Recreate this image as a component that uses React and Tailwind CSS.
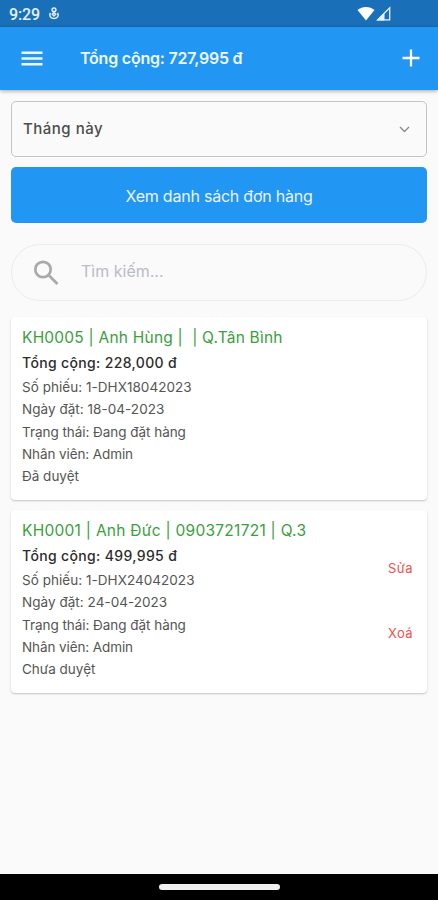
const orders = [
  {
    title: "KH0005 | Anh Hùng |  | Q.Tân Bình",
    titleStyle: "tracking-[0.22px]",
    total: "228,000 đ",
    code: "1-DHX18042023",
    date: "18-04-2023",
    status: "Đã duyệt",
    actions: false,
  },
  {
    title: "KH0001 | Anh Đức | 0903721721 | Q.3",
    titleStyle: "tracking-[0.27px]",
    total: "499,995 đ",
    code: "1-DHX24042023",
    date: "24-04-2023",
    status: "Chưa duyệt",
    actions: true,
  },
];

function StatusBar() {
  return (
    <div className="flex h-[27px] items-center bg-[#1a70b8] pl-[9px] pr-[47px] text-white">
      <span className="pt-[1px] font-[Roboto,sans-serif] text-[16px] leading-[27px] font-medium tracking-[-0.1px] text-[#e6f1fa]">9:29</span>
      <svg className="ml-[9px] h-[13px] w-[10px]" viewBox="0 0 10 13" fill="none" stroke="#e3eef8" strokeWidth="1.5">
        <circle cx="5" cy="2.800" r="1.900" />
        <path d="M3.800 4.300L6.700 7.300L5 9L3.300 7.300L5.500 5.100M1.500 6C-0.300 9 2 11.600 5 11.600S10.300 9 8.500 6" />
      </svg>
      <div className="ml-auto flex items-center gap-[1px]">
        <svg className="h-[15px] w-[18px]" viewBox="0 0 18 15" fill="white">
          <path d="M0.500 3.900C5.300 -0.100 12.700 -0.100 17.500 3.900L9 14.500Z" />
        </svg>
        <svg className="h-[15px] w-[15px]" viewBox="0 0 15 15">
          <path d="M13.700 1.800V13.800H1.700Z" fill="none" stroke="#e6f1fa" strokeWidth="1.300" />
          <path d="M0.500 14.500L8.500 6.500V14.500Z" fill="#e6f1fa" />
        </svg>
      </div>
    </div>
  );
}

function OrderCard({ order }) {
  return (
    <article className="flex h-[183px] justify-between rounded-[4px] bg-white pl-[11px] pr-[14px] pt-[8px] shadow-[0_1px_2px_rgba(0,0,0,0.22)]">
      <div className="whitespace-pre">
        <h2 className={`text-[15.5px] leading-[25px] text-[#38a03c] ${order.titleStyle}`}>{order.title}</h2>
        <p className="text-[14px] leading-[25px] font-medium tracking-[0.35px] text-[#2c2c2c]">Tổng cộng: {order.total}</p>
        <div className="pt-[1px] text-[13.5px] leading-[22.3px] text-[#555]">
          <p className="tracking-[0.04px]">Số phiếu: {order.code}</p>
          <p className="tracking-[0.04px]">Ngày đặt: {order.date}</p>
          <p className="tracking-[-0.04px]">Trạng thái: Đang đặt hàng</p>
          <p className="tracking-[-0.1px]">Nhân viên: Admin</p>
          <p>{order.status}</p>
        </div>
      </div>
      {order.actions && (
        <div className="flex flex-col items-end gap-[45px] pt-[40px] text-[13px] leading-[20px] tracking-[0.4px] text-[#f2504b]">
          <button>Sửa</button>
          <button>Xoá</button>
        </div>
      )}
    </article>
  );
}

export default function App() {
  return (
    <div className="flex h-[900px] w-[438px] flex-col overflow-hidden bg-[#fafafa] font-[Inter,sans-serif]">
      <StatusBar />
      <header className="flex h-[63px] shrink-0 items-center bg-[#2196f3] pl-[21px] pr-[18px] shadow-[0_1px_4px_rgba(0,0,0,0.35)]">
        <svg className="h-[16px] w-[22px]" viewBox="0 0 22 16" fill="#eef7fe">
          <path d="M0.500 0.500H21.500V3H0.500ZM0.500 6.300H21.500V8.800H0.500ZM0.500 12.100H21.500V14.600H0.500Z" />
        </svg>
        <h1 className="ml-[37px] pb-[1px] text-[16px] leading-[24px] font-semibold tracking-[-0.22px] text-[#eef7fe]">Tổng cộng: 727,995 đ</h1>
        <svg className="ml-auto mb-[1px] h-[18px] w-[18px]" viewBox="0 0 18 18" fill="none" stroke="white" strokeWidth="2.300">
          <path d="M9 0.500V17.500M0.500 9H17.500" />
        </svg>
      </header>
      <main className="flex min-h-0 flex-1 flex-col px-[11px] pt-[11px]">
        <div className="flex h-[56px] shrink-0 items-center justify-between rounded-[5px] border border-[#c4c4c4] pl-[11px] pr-[16px]">
          <span className="text-[15px] leading-[22px] font-medium tracking-[0.5px] text-[#4c4c4c]">Tháng này</span>
          <svg className="h-[7px] w-[11px]" viewBox="0 0 11 7" fill="none" stroke="#888" strokeWidth="1.300">
            <path d="M1 1L5.500 5.500L10 1" />
          </svg>
        </div>
        <button className="mt-[10px] h-[56px] shrink-0 rounded-[5px] bg-[#2196f3] pt-[2px] text-[16px] tracking-[-0.22px] text-[#eaf5fe]">Xem danh sách đơn hàng</button>
        <div className="mt-[21px] flex h-[57px] shrink-0 items-center rounded-full border border-[#ececec] pl-[21px]">
          <svg className="h-[26px] w-[26px]" viewBox="0 0 26 26" fill="none" stroke="#a9a9a9" strokeWidth="2.700">
            <circle cx="10" cy="9.500" r="7.700" />
            <path d="M15.500 15L24.500 24" />
          </svg>
          <span className="ml-[22px] pb-[4px] text-[16px] leading-[24px] text-[#b9bcc6]">Tìm kiếm...</span>
        </div>
        <div className="mt-[16px] flex flex-col gap-[10px]">
          {orders.map((order) => (
            <OrderCard key={order.code} order={order} />
          ))}
        </div>
      </main>
      <footer className="flex h-[26px] shrink-0 justify-center bg-black pt-[10px]">
        <div className="h-[6px] w-[121px] rounded-full bg-[#f0f0f0]" />
      </footer>
    </div>
  );
}
